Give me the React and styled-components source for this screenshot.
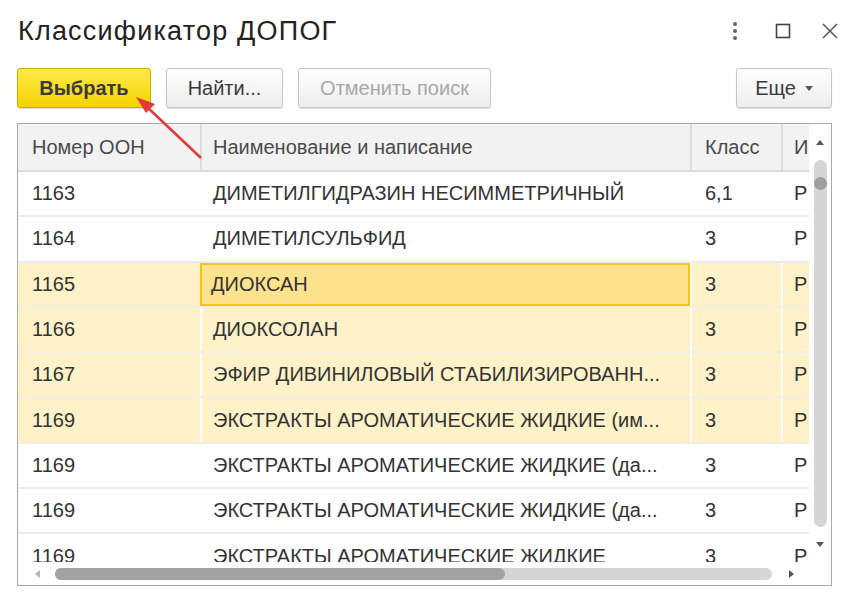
import React from "react";
import styled, { createGlobalStyle } from "styled-components";

const GlobalStyle = createGlobalStyle`
  html, body {
    margin: 0;
    padding: 0;
    background: #ffffff;
  }
  body {
    font-family: "Liberation Sans", Arial, sans-serif;
    color: #333333;
  }
`;

const Window = styled.div`
  position: relative;
  width: 859px;
  height: 602px;
  box-sizing: border-box;
  padding: 11px 27px 0 17px;
  display: flex;
  flex-direction: column;
`;

const TitleBar = styled.div`
  display: flex;
  align-items: center;
  height: 40px;
`;

const Title = styled.h1`
  flex: 1;
  margin: 0 0 0 1px;
  font-size: 27px;
  font-weight: normal;
  color: #222222;
  letter-spacing: 1.2px;
`;

const WinControls = styled.div`
  display: flex;
  align-items: center;
  margin-right: -7px;
`;

const WinButton = styled.div`
  display: flex;
  align-items: center;
  justify-content: center;
  margin-left: ${(p) => p.$ml || 0}px;
`;

const Toolbar = styled.div`
  display: flex;
  align-items: center;
  gap: 15px;
  margin-top: 17px;
  height: 40px;
`;

const Button = styled.button`
  height: 40px;
  box-sizing: border-box;
  padding: 0;
  border-radius: 3px;
  border: 1px solid ${(p) => (p.$primary ? "#c9b000" : "#c4c4c4")};
  background: ${(p) =>
    p.$primary
      ? "linear-gradient(#ffe94a, #f4d300)"
      : "linear-gradient(#ffffff, #ededed)"};
  box-shadow: 0 1px 1px rgba(0, 0, 0, 0.15);
  font-family: "Liberation Sans", Arial, sans-serif;
  font-size: 20px;
  font-weight: ${(p) => (p.$primary ? "bold" : "normal")};
  color: ${(p) => (p.$disabled ? "#a8a8a8" : "#3a3a3a")};
  display: flex;
  align-items: center;
  justify-content: center;
  gap: 9px;
  width: ${(p) => p.$w}px;
`;

const Spacer = styled.div`
  flex: 1;
`;

const Frame = styled.div`
  margin-top: 15px;
  width: 815px;
  height: 463px;
  box-sizing: border-box;
  border: 1px solid #a9a9a9;
  display: grid;
  grid-template-columns: 791px 1fr;
  grid-template-rows: 438px 1fr;
  overflow: hidden;
`;

const Content = styled.div`
  overflow: hidden;
`;

const Row = styled.div`
  display: grid;
  grid-template-columns: 182px 490px 91px 40px;
  height: ${(p) => (p.$head ? "48px" : "45.3px")};
  box-sizing: border-box;
  background: ${(p) => (p.$head ? "#f2f2f2" : p.$hl ? "#fff2c8" : "#ffffff")};
  border-bottom: 2px solid
    ${(p) => (p.$head ? "#dcdcdc" : p.$hl ? "#f3efe4" : "#ececec")};
`;

const Cell = styled.div`
  display: flex;
  align-items: center;
  min-width: 0;
  padding-left: ${(p) => p.$pl || 12}px;
  box-sizing: border-box;
  font-size: 20px;
  color: ${(p) => (p.$head ? "#4a4a4a" : "#333333")};
  white-space: nowrap;
  overflow: hidden;
  border-left: 2px solid
    ${(p) =>
      p.$first ? "transparent" : p.$head ? "#dcdcdc" : p.$hl ? "#ffffff" : "transparent"};
  ${(p) =>
    p.$selected &&
    `
    background: #fee38e;
    border: 2px solid #f6c31a;
    padding-left: 9px;
  `}
`;

const VScroll = styled.div`
  display: flex;
  flex-direction: column;
  align-items: center;
  padding-top: 15px;
`;

const VTrack = styled.div`
  position: relative;
  width: 13px;
  height: 367px;
  margin: 13px 0 14px;
  border-radius: 7px;
  background: #d6d6d6;
`;

const Knob = styled.div`
  position: absolute;
  left: 0;
  top: 17px;
  width: 13px;
  height: 13px;
  border-radius: 50%;
  background: #9e9e9e;
`;

const HScroll = styled.div`
  grid-column: 1 / 3;
  display: flex;
  align-items: center;
  padding-left: 16px;
`;

const HTrack = styled.div`
  position: relative;
  width: 717px;
  height: 12px;
  margin: 0 16px 0 13px;
  border-radius: 6px;
  background: #d6d6d6;
`;

const HThumb = styled.div`
  position: absolute;
  left: 0;
  top: 0;
  height: 12px;
  width: 450px;
  border-radius: 6px;
  background: #a3a3a3;
`;

const ArrowIcon = styled.svg`
  display: block;
  flex: none;
`;

const Pointer = styled.svg`
  position: absolute;
  left: 0;
  top: 0;
  pointer-events: none;
`;

// names are shown as the grid displays them (cut to the column width)
const rows = [
  ["1163", "ДИМЕТИЛГИДРАЗИН НЕСИММЕТРИЧНЫЙ", "6,1", false],
  ["1164", "ДИМЕТИЛСУЛЬФИД", "3", false],
  ["1165", "ДИОКСАН", "3", true, true],
  ["1166", "ДИОКСОЛАН", "3", true],
  ["1167", "ЭФИР ДИВИНИЛОВЫЙ СТАБИЛИЗИРОВАНН...", "3", true],
  ["1169", "ЭКСТРАКТЫ АРОМАТИЧЕСКИЕ ЖИДКИЕ (им...", "3", true],
  ["1169", "ЭКСТРАКТЫ АРОМАТИЧЕСКИЕ ЖИДКИЕ (да...", "3", false],
  ["1169", "ЭКСТРАКТЫ АРОМАТИЧЕСКИЕ ЖИДКИЕ (да...", "3", false],
  ["1169", "ЭКСТРАКТЫ АРОМАТИЧЕСКИЕ ЖИДКИЕ", "3", false],
];

const Tri = ({ dir }) => {
  const pts = {
    up: "0,6 4,1 8,6",
    down: "0,1 4,6 8,1",
    left: "6,0 1,4 6,8",
    right: "1,0 6,4 1,8",
  }[dir];
  return (
    <ArrowIcon width="8" height="8" viewBox="0 0 8 8">
      <polygon points={pts} fill={dir === "left" ? "#b5b5b5" : "#555555"} />
    </ArrowIcon>
  );
};

export default function App() {
  return (
    <>
      <GlobalStyle />
      <Window>
        <TitleBar>
          <Title>Классификатор ДОПОГ</Title>
          <WinControls>
            <WinButton>
              <svg width="6" height="20" viewBox="0 0 6 20">
                <circle cx="3" cy="3" r="2" fill="#666" />
                <circle cx="3" cy="10" r="2" fill="#666" />
                <circle cx="3" cy="17" r="2" fill="#666" />
              </svg>
            </WinButton>
            <WinButton $ml={37}>
              <svg width="16" height="16" viewBox="0 0 16 16">
                <rect x="1.5" y="1.5" width="13" height="13" fill="none" stroke="#444" strokeWidth="1.6" />
              </svg>
            </WinButton>
            <WinButton $ml={30}>
              <svg width="18" height="18" viewBox="0 0 18 18">
                <path d="M2 2 L16 16 M16 2 L2 16" stroke="#555" strokeWidth="1.5" />
              </svg>
            </WinButton>
          </WinControls>
        </TitleBar>

        <Toolbar>
          <Button $primary $w={134}>Выбрать</Button>
          <Button $w={117}>Найти...</Button>
          <Button $disabled $w={193}>Отменить поиск</Button>
          <Spacer />
          <Button $w={96}>
            Еще
            <svg width="8" height="5" viewBox="0 0 8 5">
              <polygon points="0,0 8,0 4,5" fill="#555" />
            </svg>
          </Button>
        </Toolbar>

        <Frame>
          <Content>
            <Row $head>
              <Cell $head $first>Номер ООН</Cell>
              <Cell $head $pl={11}>Наименование и написание</Cell>
              <Cell $head $pl={13}>Класс</Cell>
              <Cell $head $pl={11}>И</Cell>
            </Row>
            {rows.map(([num, name, cls, hl, sel], i) => (
              <Row key={i} $hl={hl}>
                <Cell $first>{num}</Cell>
                <Cell $hl={hl} $selected={sel} $pl={11}>{name}</Cell>
                <Cell $hl={hl} $pl={13}>{cls}</Cell>
                <Cell $hl={hl} $pl={11}>Р</Cell>
              </Row>
            ))}
          </Content>
          <VScroll>
            <Tri dir="up" />
            <VTrack>
              <Knob />
            </VTrack>
            <Tri dir="down" />
          </VScroll>
          <HScroll>
            <Tri dir="left" />
            <HTrack>
              <HThumb />
            </HTrack>
            <Tri dir="right" />
          </HScroll>
        </Frame>

        <Pointer width="859" height="602" viewBox="0 0 859 602">
          <line x1="201" y1="158" x2="146" y2="106" stroke="#e53935" strokeWidth="2.5" />
          <polygon points="136,97 155,104 146,113" fill="#e53935" />
        </Pointer>
      </Window>
    </>
  );
}
